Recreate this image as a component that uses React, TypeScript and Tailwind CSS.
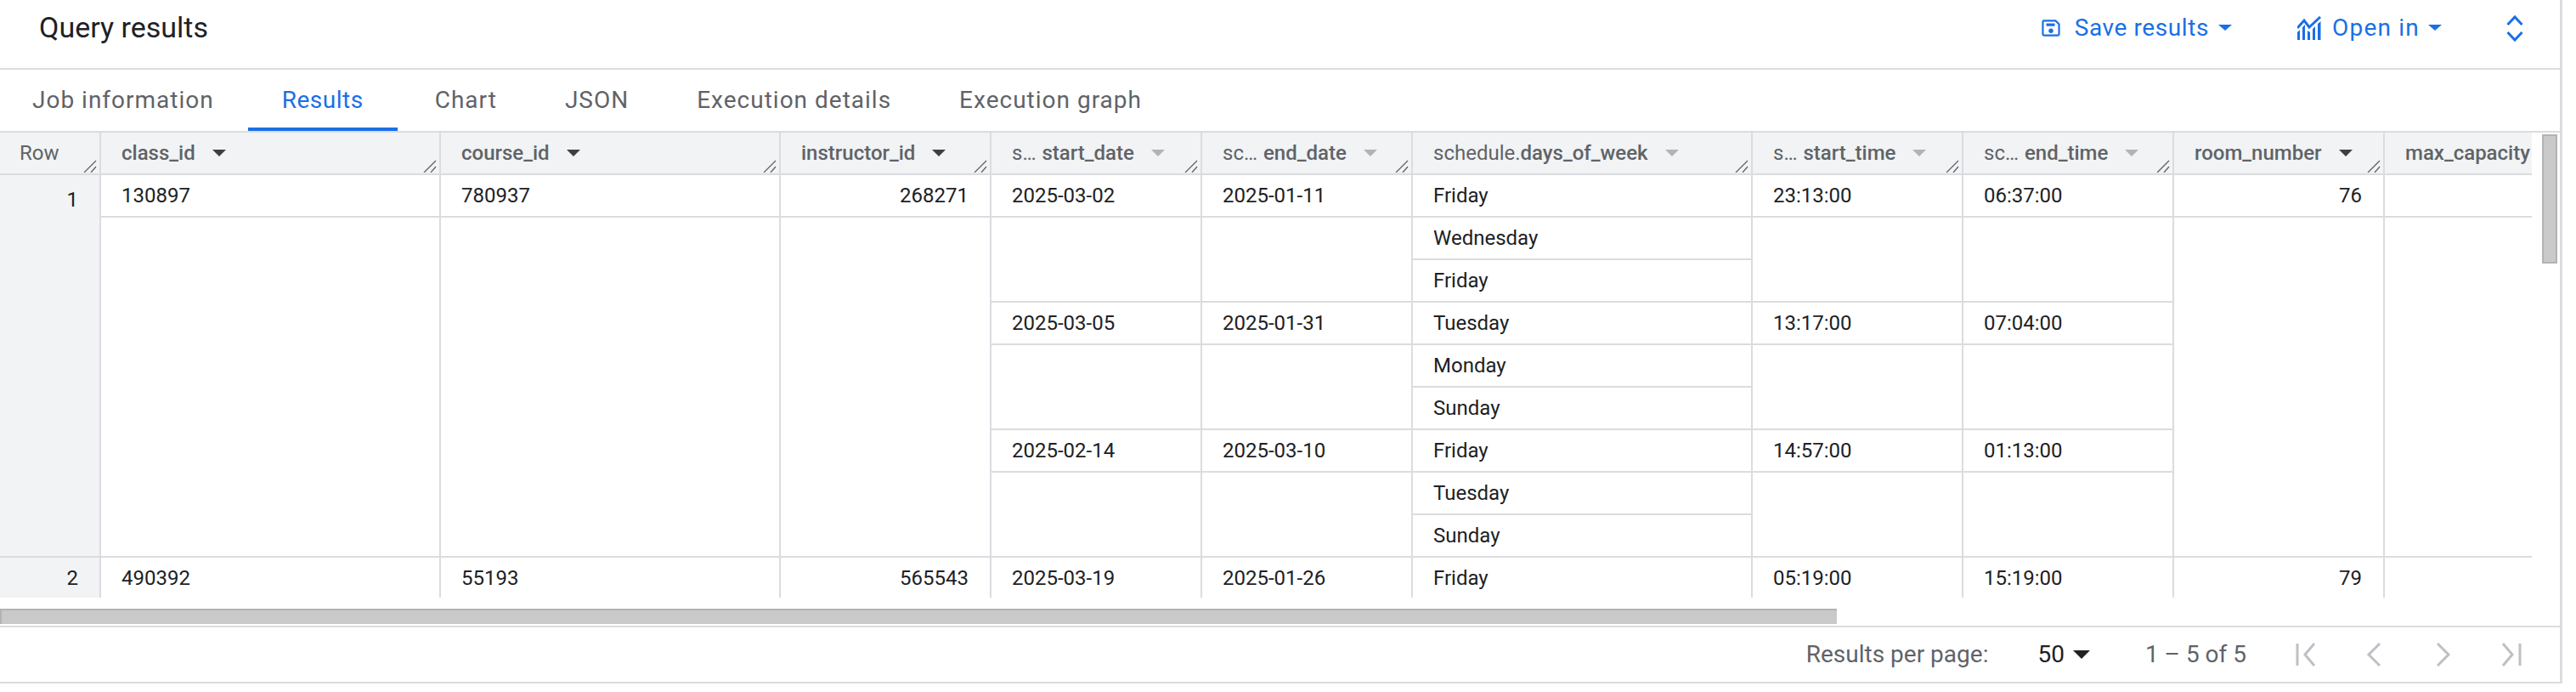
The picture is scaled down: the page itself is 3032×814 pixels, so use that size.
import React from "react";

const Sort = ({ light }: { light?: boolean }) => (
  <svg width="16" height="8" viewBox="0 0 16 8" className="shrink-0">
    <path d="M0 0H16L8 8Z" fill={light ? "#b3b3b3" : "#3c4043"} />
  </svg>
);

const Caret = ({ color = "#1a6fe6", w = 16, h = 7 }: { color?: string; w?: number; h?: number }) => (
  <svg width={w} height={h} viewBox="0 0 16 8" preserveAspectRatio="none" className="shrink-0">
    <path d="M0 0H16L8 8Z" fill={color} />
  </svg>
);

const Grip = () => (
  <svg width="16" height="15" viewBox="0 0 16 15" className="absolute right-[3px] bottom-[1px]">
    <path d="M1 15L15 1M9 15L15 8" stroke="#5f6368" strokeWidth="1.3" fill="none" />
  </svg>
);

type H = { pre?: string; gap?: boolean; name: string; light?: boolean };

const headers: H[] = [
  { name: "class_id" },
  { name: "course_id" },
  { name: "instructor_id" },
  { pre: "s…", gap: true, name: "start_date", light: true },
  { pre: "sc…", gap: true, name: "end_date", light: true },
  { pre: "schedule.", name: "days_of_week", light: true },
  { pre: "s…", gap: true, name: "start_time", light: true },
  { pre: "sc…", gap: true, name: "end_time", light: true },
  { name: "room_number" },
  { name: "max_capacity" },
];

const td = "border-r-2 border-b-2 border-[#dadce0] h-[50px] p-0 pl-6 align-middle bg-white whitespace-nowrap";
const tdR = "border-r-2 border-b-2 border-[#dadce0] h-[50px] p-0 pr-[25px] text-right align-middle bg-white";
const blank = "border-r-2 border-b-2 border-[#dadce0] p-0 bg-white";
const rowNo = "border-r-2 border-b-2 border-[#dadce0] p-0 pr-[25px] pt-[11px] text-right align-top bg-[#f1f3f4]";

const sub = [
  { d: "Friday", s: "2025-03-02", e: "2025-01-11", st: "23:13:00", et: "06:37:00" },
  { d: "Wednesday" },
  { d: "Friday" },
  { d: "Tuesday", s: "2025-03-05", e: "2025-01-31", st: "13:17:00", et: "07:04:00" },
  { d: "Monday" },
  { d: "Sunday" },
  { d: "Friday", s: "2025-02-14", e: "2025-03-10", st: "14:57:00", et: "01:13:00" },
  { d: "Tuesday" },
  { d: "Sunday" },
];

function Table() {
  return (
    <table className="border-separate border-spacing-0 table-fixed w-[3250px] text-[24px] text-[#202124]">
      <colgroup>
        <col className="w-[119px]" />
        <col className="w-[400px]" />
        <col className="w-[400px]" />
        <col className="w-[248px]" />
        <col className="w-[248px]" />
        <col className="w-[248px]" />
        <col className="w-[400px]" />
        <col className="w-[248px]" />
        <col className="w-[248px]" />
        <col className="w-[248px]" />
        <col className="w-[443px]" />
      </colgroup>
      <thead>
        <tr>
          <th className="relative h-[50px] border-r-2 border-b-2 border-[#dadce0] bg-[#f1f3f4] p-0 pl-[23px] text-left font-normal text-[#5f6368]">
            Row
            <Grip />
          </th>
          {headers.map((h) => (
            <th key={h.name} className="relative h-[50px] border-r-2 border-b-2 border-[#dadce0] bg-[#f1f3f4] p-0 pl-6 text-left font-normal text-[#5f6368]">
              <div className="flex items-center gap-5 whitespace-nowrap">
                <span>
                  {h.pre && <span className={h.gap ? "mr-[7px]" : ""}>{h.pre}</span>}
                  <span className="font-medium">{h.name}</span>
                </span>
                <Sort light={h.light} />
              </div>
              <Grip />
            </th>
          ))}
        </tr>
      </thead>
      <tbody>
        {sub.map((r, i) => (
          <tr key={i}>
            {i === 0 && (
              <>
                <td rowSpan={9} className={rowNo}>1</td>
                <td className={td}>130897</td>
                <td className={td}>780937</td>
                <td className={tdR}>268271</td>
              </>
            )}
            {i === 1 && (
              <>
                <td rowSpan={8} className={blank} />
                <td rowSpan={8} className={blank} />
                <td rowSpan={8} className={blank} />
              </>
            )}
            {r.s ? <td className={td}>{r.s}</td> : i % 3 === 1 ? <td rowSpan={2} className={blank} /> : null}
            {r.e ? <td className={td}>{r.e}</td> : i % 3 === 1 ? <td rowSpan={2} className={blank} /> : null}
            <td className={td}>{r.d}</td>
            {r.st ? <td className={td}>{r.st}</td> : i % 3 === 1 ? <td rowSpan={2} className={blank} /> : null}
            {r.et ? <td className={td}>{r.et}</td> : i % 3 === 1 ? <td rowSpan={2} className={blank} /> : null}
            {i === 0 && (
              <>
                <td className={tdR}>76</td>
                <td className={td} />
              </>
            )}
            {i === 1 && (
              <>
                <td rowSpan={8} className={blank} />
                <td rowSpan={8} className={blank} />
              </>
            )}
          </tr>
        ))}
        <tr>
          <td className="h-[50px] border-r-2 border-b-2 border-[#dadce0] bg-[#f1f3f4] p-0 pr-[25px] text-right">2</td>
          <td className={td}>490392</td>
          <td className={td}>55193</td>
          <td className={tdR}>565543</td>
          <td className={td}>2025-03-19</td>
          <td className={td}>2025-01-26</td>
          <td className={td}>Friday</td>
          <td className={td}>05:19:00</td>
          <td className={td}>15:19:00</td>
          <td className={tdR}>79</td>
          <td className={td} />
        </tr>
      </tbody>
    </table>
  );
}

export default function App() {
  return (
    <div className="w-[3016px] h-[804px] flex flex-col border-r-[3px] border-b-2 border-[#dadce0] bg-white font-['Roboto',sans-serif]">
      <header className="h-[82px] shrink-0 border-b-2 border-[#dadce0] flex items-center pl-[46px] pb-[14px]">
        <h1 className="text-[34px] leading-none text-[#202124] font-normal mb-[2px]">Query results</h1>
        <div className="ml-auto flex items-center text-[28px] text-[#1a6fe6]">
          <svg width="22" height="20" viewBox="0 0 24 22" className="shrink-0">
            <path d="M2.5 1.5H18L22.5 6V19a1.5 1.5 0 0 1-1.5 1.5H3A1.5 1.5 0 0 1 1.5 19V3A1.5 1.5 0 0 1 2.5 1.5Z" fill="none" stroke="#1a6fe6" strokeWidth="2.4" />
            <rect x="6" y="5" width="11" height="3.5" fill="#1a6fe6" />
            <circle cx="12" cy="14.5" r="3" fill="#1a6fe6" />
          </svg>
          <span className="ml-[17px] tracking-[0.6px]">Save results</span>
          <span className="ml-[11px] -mt-[2px]"><Caret /></span>
          <svg width="28" height="28" viewBox="0 0 28 28" className="ml-[77px] shrink-0">
            <path d="M0 14L8 5L14 13L27 1" fill="none" stroke="#1a6fe6" strokeWidth="3" />
            <path d="M0 28V19L3 16V28ZM6 28V13L9 10V28ZM12 28V17L15 19V28ZM18 28V15L21 12V28ZM24 28V9L27.5 6V28Z" fill="#1a6fe6" />
          </svg>
          <span className="ml-[13px] tracking-[1.2px]">Open in</span>
          <span className="ml-[10px] -mt-[2px]"><Caret /></span>
          <svg width="20" height="32" viewBox="0 0 20 32" className="ml-[76px] mr-[43px] shrink-0">
            <path d="M1.5 12L10 3L18.5 12M1.5 21L10 30L18.5 21" fill="none" stroke="#1a6fe6" strokeWidth="3" />
          </svg>
        </div>
      </header>

      <nav className="h-[74px] shrink-0 border-b-2 border-[#dadce0] flex text-[28px] tracking-[1px] text-[#5f6368]">
        <div className="px-10 pt-[15px] -ml-[2px]">Job information</div>
        <div className="px-10 pt-[15px] border-b-4 border-[#1a6fe6] text-[#1a6fe6] h-[72px] tracking-[0.5px]">Results</div>
        <div className="px-10 pt-[15px] ml-1">Chart</div>
        <div className="px-10 pt-[15px]">JSON</div>
        <div className="px-10 pt-[15px]">Execution details</div>
        <div className="px-10 pt-[15px]">Execution graph</div>
      </nav>

      <section className="flex-1 min-h-0 flex flex-col">
        <div className="flex">
          <div className="w-[2980px] h-[547px] overflow-hidden">
            <Table />
          </div>
          <div className="pl-3 pt-[2px]">
            <div className="w-[18px] h-[152px] bg-[#c9c9c9] border-2 border-[#b3b3b3]" />
          </div>
        </div>
        <div className="mt-[13px] w-[2162px] h-[18px] bg-[#c9c9c9] border-t-2 border-l-2 border-[#b3b3b3]" />
      </section>

      <footer className="h-[66px] shrink-0 mt-[2px] border-t-2 border-[#dadce0] flex items-center justify-end text-[28px] text-[#5f6368]">
        <span>Results per page:</span>
        <span className="ml-[58px] text-[#202124]">50</span>
        <span className="ml-[10px]"><Caret color="#202124" w={20} h={10} /></span>
        <span className="ml-[65px]">1 – 5 of 5</span>
        <svg width="24" height="28" viewBox="0 0 24 28" className="ml-[58px] shrink-0">
          <path d="M2 1V27M22 1L11 14L22 27" fill="none" stroke="#bdc1c6" strokeWidth="3" />
        </svg>
        <svg width="18" height="28" viewBox="0 0 18 28" className="ml-[59px] shrink-0">
          <path d="M16 1L3 14L16 27" fill="none" stroke="#bdc1c6" strokeWidth="3" />
        </svg>
        <svg width="18" height="28" viewBox="0 0 18 28" className="ml-[64px] shrink-0">
          <path d="M2 1L15 14L2 27" fill="none" stroke="#bdc1c6" strokeWidth="3" />
        </svg>
        <svg width="24" height="28" viewBox="0 0 24 28" className="ml-[59px] mr-[45px] shrink-0">
          <path d="M22 1V27M2 1L13 14L2 27" fill="none" stroke="#bdc1c6" strokeWidth="3" />
        </svg>
      </footer>
    </div>
  );
}
